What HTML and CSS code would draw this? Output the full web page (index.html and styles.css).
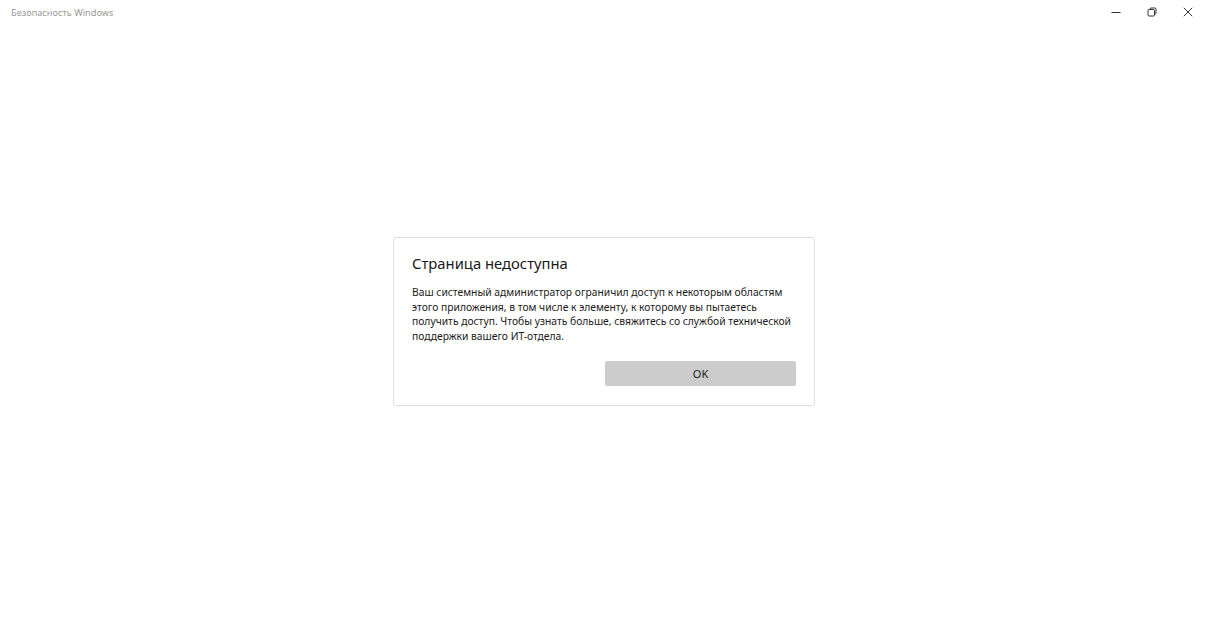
FILE: index.html
```html
<!DOCTYPE html>
<html lang="ru">
<head>
<meta charset="utf-8">
<title>Безопасность Windows</title>
<link rel="stylesheet" href="styles.css">
</head>
<body>
<div class="window">
  <div class="titlebar">
    <span class="app-title">Безопасность Windows</span>
    <div class="controls">
      <span class="ctl"><svg width="10" height="10" viewBox="0 0 10 10"><path d="M0.5 5.5h9" stroke="#333" stroke-width="1"/></svg></span>
      <span class="ctl"><svg width="10" height="10" viewBox="0 0 10 10"><rect x="1" y="2.5" width="6.5" height="6.5" rx="1" fill="none" stroke="#333" stroke-width="1"/><path d="M3 2.5v-0.5a1 1 0 0 1 1-1h4a1 1 0 0 1 1 1v4a1 1 0 0 1-1 1h-0.5" fill="none" stroke="#333" stroke-width="1"/></svg></span>
      <span class="ctl"><svg width="10" height="10" viewBox="0 0 10 10"><path d="M0.8 0.8l8.4 8.4M9.2 0.8l-8.4 8.4" stroke="#333" stroke-width="1"/></svg></span>
    </div>
  </div>
  <main class="content">
    <div class="dialog">
      <h1 class="dlg-title">Страница недоступна</h1>
      <p class="dlg-text">Ваш системный администратор ограничил доступ к некоторым областям этого приложения, в том числе к элементу, к которому вы пытаетесь получить доступ. Чтобы узнать больше, свяжитесь со службой технической поддержки вашего ИТ-отдела.</p>
      <div class="dlg-actions">
        <button class="btn">OK</button>
      </div>
    </div>
  </main>
</div>
</body>
</html>
```
FILE: styles.css
```css
html, body {
  margin: 0;
  padding: 0;
  background: #ffffff;
  font-family: "Noto Sans", "Open Sans", sans-serif;
  color: #1a1a1a;
}
.window {
  width: 1207px;
  height: 640px;
  display: flex;
  flex-direction: column;
}
.titlebar {
  height: 24px;
  display: flex;
  align-items: center;
  justify-content: space-between;
  padding-left: 11px;
}
.app-title {
  font-size: 9.2px;
  color: #999999;
}
.controls {
  display: flex;
  height: 24px;
  padding-right: 1px;
}
.ctl {
  width: 36px;
  display: flex;
  align-items: center;
  justify-content: center;
}
.content {
  flex: 1;
  display: flex;
  justify-content: center;
  padding-top: 213px;
  padding-left: 1px;
}
.dialog {
  width: 384px;
  border: 1px solid #dedede;
  border-radius: 3px;
  padding: 14px 18px 19px 18px;
  align-self: flex-start;
  box-shadow: 0 0 2px rgba(0,0,0,0.04);
}
.dlg-title {
  margin: 0;
  font-size: 14.8px;
  font-weight: 400;
  line-height: 22px;
  color: #1a1a1a;
}
.dlg-text {
  margin: 11px 0 0 0;
  font-size: 10.3px;
  line-height: 14.7px;
  color: #1a1a1a;
}
.dlg-actions {
  display: flex;
  justify-content: flex-end;
  margin-top: 17px;
}
.btn {
  width: 191px;
  height: 25px;
  border: none;
  border-radius: 2px;
  background: #cccccc;
  font-family: inherit;
  font-size: 11px;
  color: #1a1a1a;
  padding: 0;
}
```
